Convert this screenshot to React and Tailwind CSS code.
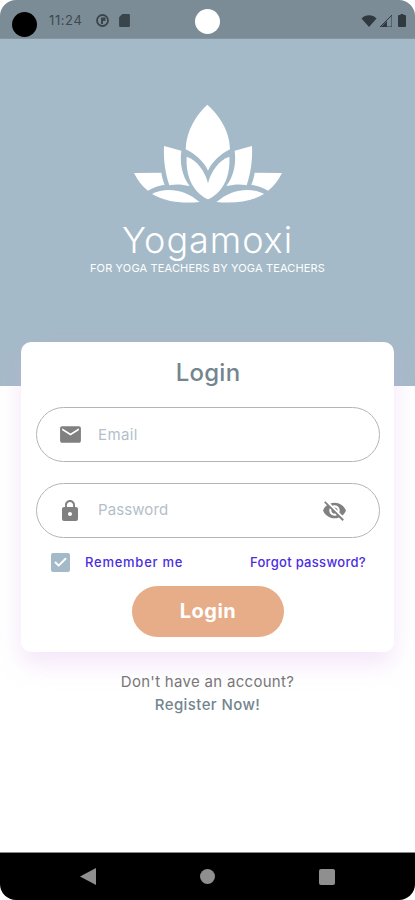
import React from 'react';
import { Check } from 'lucide-react';

function Lotus() {
  const half = (
    <>
      <path d="M176 170C205 178 232 215 240 250L240 298C200 280 172 235 176 170Z" />
      <path d="M108 138L160 152C155 190 162 228 185 258C160 252 140 252 124 256C112 220 106 180 108 138Z" />
      <path d="M18 219L100 218C102 232 106 245 110 254C90 257 74 263 60 272C42 258 28 240 18 219Z" />
      <path d="M72 282C110 262 165 264 215 306C160 311 110 305 72 282Z" />
    </>
  );
  return (
    <svg width="160" height="108" viewBox="0 0 480 324" fill="#ffffff">
      <path d="M238 14C205 45 175 90 173 148C200 160 228 185 240 212C252 185 280 160 306 148C305 90 272 45 238 14Z" />
      {half}
      <g transform="matrix(-1 0 0 1 480 0)">{half}</g>
    </svg>
  );
}

function MailIcon() {
  return (
    <svg width="25" height="25" viewBox="0 0 24 24" fill="#808080">
      <path d="M20 4H4c-1.100 0-2 .9-2 2v12c0 1.100.9 2 2 2h16c1.100 0 2-.9 2-2V6c0-1.100-.9-2-2-2zm0 4l-8 5-8-5V6l8 5 8-5v2z" />
    </svg>
  );
}

function LockIcon() {
  return (
    <svg width="24" height="24" viewBox="0 0 24 24" fill="#808080">
      <path d="M18 8h-1V6c0-2.760-2.240-5-5-5S7 3.240 7 6v2H6c-1.100 0-2 .9-2 2v10c0 1.100.9 2 2 2h12c1.100 0 2-.9 2-2V10c0-1.100-.9-2-2-2zm-6 9c-1.100 0-2-.9-2-2s.9-2 2-2 2 .9 2 2-.9 2-2 2zm3.100-9H8.900V6c0-1.710 1.390-3.100 3.100-3.100 1.710 0 3.100 1.390 3.100 3.100v2z" />
    </svg>
  );
}

function EyeOffIcon() {
  return (
    <svg width="25" height="25" viewBox="0 0 24 24" fill="#808080">
      <path d="M12 7c2.760 0 5 2.240 5 5 0 .65-.13 1.260-.36 1.830l2.920 2.920c1.510-1.260 2.700-2.890 3.430-4.750-1.730-4.390-6-7.500-11-7.500-1.400 0-2.740.25-3.980.7l2.160 2.160C10.740 7.130 11.350 7 12 7zM2 4.270l2.280 2.280.46.46C3.080 8.300 1.780 10.020 1 12c1.730 4.390 6 7.500 11 7.500 1.550 0 3.030-.3 4.380-.84l.42.42L19.730 22 21 20.730 3.270 3 2 4.270zM7.530 9.800l1.550 1.550c-.05.21-.08.43-.08.65 0 1.660 1.340 3 3 3 .22 0 .44-.03.65-.08l1.550 1.550c-.67.33-1.410.53-2.200.53-2.760 0-5-2.240-5-5 0-.79.2-1.530.53-2.200zm4.310-.78l3.150 3.150.02-.16c0-1.660-1.340-3-3-3l-.17.01z" />
    </svg>
  );
}

export default function App() {
  return (
    <div className="relative h-[900px] w-[415px] overflow-hidden bg-white font-['Inter',sans-serif]">
      <div className="flex h-[852px] flex-col overflow-hidden rounded-t-[16px]">
        {/* Status bar */}
        <div className="flex h-[39px] shrink-0 items-center justify-between border-b border-[#84959f] bg-[#7b8c96] pl-[49px] pr-[9px] pt-[3px]">
          <div className="flex items-center text-[#3f4a50]">
            <span className="w-[47px] text-[13px] tracking-[0.6px]">11:24</span>
            <svg width="13" height="13" viewBox="0 0 13 13">
              <circle cx="6.500" cy="6.500" r="5.500" fill="none" stroke="#3a454b" strokeWidth="1.800" />
              <path d="M5 3.500h4.500v3.500H7v3H5z" fill="#3a454b" />
            </svg>
            <svg width="11" height="13" viewBox="0 0 10 12" className="ml-[10px]" fill="#3a454b">
              <path d="M3 0h6a1 1 0 0 1 1 1v10a1 1 0 0 1-1 1H1a1 1 0 0 1-1-1V3z" />
            </svg>
          </div>
          <div className="flex items-center gap-[3px]">
            <svg width="16" height="12" viewBox="0 0 15 12" fill="#2f393f">
              <path d="M0 3.500C4-.8 11-.8 15 3.500L7.500 12z" />
            </svg>
            <svg width="12" height="12" viewBox="0 0 12 12">
              <path d="M12 0v12H0z" fill="none" stroke="#2f393f" strokeWidth="1" />
              <path d="M7 6v6H1z" fill="#2f393f" />
            </svg>
            <svg width="8" height="13" viewBox="0 0 8 13" className="ml-[3px]" fill="#2f393f">
              <path d="M2.500 0h3v1H7a1 1 0 0 1 1 1v10a1 1 0 0 1-1 1H1a1 1 0 0 1-1-1V2a1 1 0 0 1 1-1h1.500z" />
            </svg>
          </div>
        </div>

        {/* Hero */}
        <div className="flex h-[347px] shrink-0 flex-col items-center bg-[#a5bac8] pt-[61px] text-white">
          <Lotus />
          <div className="mt-[10px] text-[36px] leading-[44px] font-light tracking-[0.95px]">Yogamoxi</div>
          <div className="text-[11px] leading-[13px] tracking-[0.15px]">FOR YOGA TEACHERS BY YOGA TEACHERS</div>
        </div>

        {/* Card */}
        <div className="relative z-10 mx-[21px] mt-[-44px] flex h-[310px] shrink-0 flex-col rounded-[10px] bg-white pl-[15px] pr-[14px] shadow-[0_12px_24px_rgba(215,165,235,0.28)]">
          <h1 className="mt-[16px] text-center text-[24px] leading-[30px] font-medium tracking-[0.25px] text-[#74858f]">Login</h1>
          <div className="mt-[19px] flex h-[55px] items-center rounded-full border border-[#b5b5b5] pl-[21px]">
            <MailIcon />
            <span className="ml-[15px] mt-[2px] text-[15px] tracking-[0.4px] text-[#b3c0c9]">Email</span>
          </div>
          <div className="mt-[21px] flex h-[55px] items-center rounded-full border border-[#b5b5b5] pl-[21px] pr-[32px]">
            <LockIcon />
            <span className="ml-[16px] -mt-[1px] flex-1 text-[15px] tracking-[0.1px] text-[#b3c0c9]">Password</span>
            <EyeOffIcon />
          </div>
          <div className="mt-[14px] flex items-center pl-[15px] pr-[14px]">
            <div className="flex h-[19px] w-[19px] items-center justify-center rounded-[2px] bg-[#a5bac8]">
              <Check size={15} stroke="#ffffff" strokeWidth={3} />
            </div>
            <span className="ml-[15px] mt-[1px] flex-1 text-[13px] font-medium tracking-[0.75px] text-[#4a2ee0]">Remember me</span>
            <span className="mt-[1px] text-[13px] font-medium tracking-[0.3px] text-[#4a2ee0]">Forgot password?</span>
          </div>
          <button className="mx-auto mt-[13px] h-[51px] w-[152px] rounded-full bg-[#e6ad88] text-[20px] font-bold tracking-[0.5px] text-white">Login</button>
        </div>

        {/* Register */}
        <div className="mt-[18px] text-center text-[15px] leading-[23px] text-[#777777]">
          <p className="tracking-[0.3px]">Don't have an account?</p>
          <p className="font-medium tracking-[0.4px] text-[#74858f]">Register Now!</p>
        </div>
      </div>

      {/* Nav bar */}
      <div className="flex h-[48px] items-center justify-center gap-[104px] rounded-b-[16px] border-t border-[#8a8a8a] bg-black">
        <svg width="16" height="17" viewBox="0 0 16 17" fill="#8f8f8f"><path d="M16 0v17L0 8.500z" /></svg>
        <div className="h-[15px] w-[15px] rounded-full bg-[#8f8f8f]" />
        <div className="h-[16px] w-[16px] rounded-[2px] bg-[#8f8f8f]" />
      </div>

      {/* Camera dots from the capture */}
      <div className="absolute left-[12px] top-[12px] h-[25px] w-[25px] rounded-full bg-black" />
      <div className="absolute left-[195px] top-[9px] h-[25px] w-[25px] rounded-full bg-white" />
    </div>
  );
}
